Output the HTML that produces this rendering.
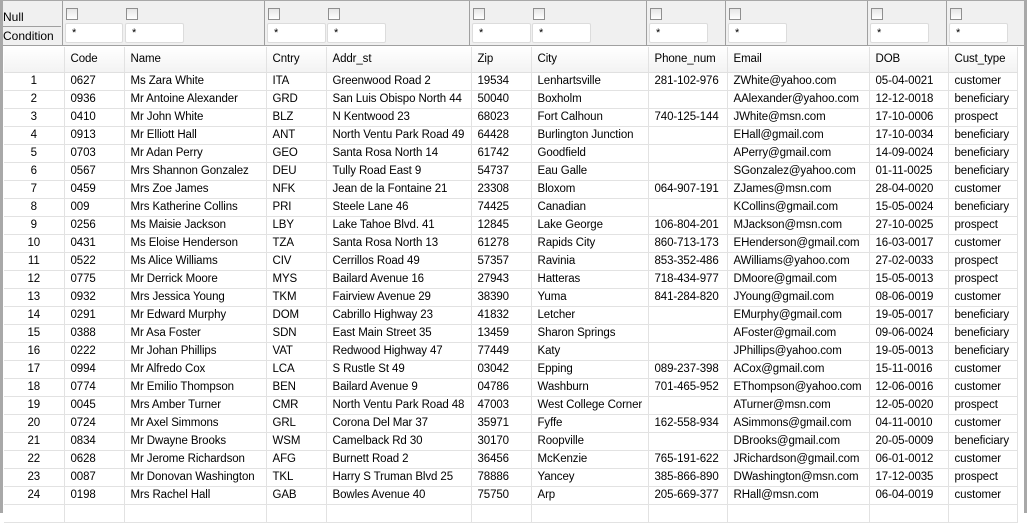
<!DOCTYPE html>
<html><head><style>
*{margin:0;padding:0;box-sizing:border-box}
body{width:1027px;height:513px;overflow:hidden;background:#fff;font-family:"Liberation Sans",Tahoma,sans-serif;font-size:12px;color:#000;position:relative}
.top{position:absolute;left:0;top:0;width:1027px;height:46px;background:#f0f0f0;border-bottom:1px solid #a0a0a0}
.lbl{position:absolute;left:3px;font-size:12px}
.cb{position:absolute;top:8px;width:12px;height:12px;border:1px solid #8f8f8f;background:linear-gradient(#e6e6e6,#fff)}
.in{position:absolute;top:23px;height:20px;background:#fff;border:1px solid #dcdcdc;border-radius:2px;padding:3px 0 0 6px;font-size:11px}
.sep{position:absolute;top:0;width:1px;height:46px;background:#a0a0a0}
.frame{position:absolute;left:0;top:0;width:1027px;height:513px;border-left:3px solid #a8a8a8;border-right:3px solid #a8a8a8;border-top:1px solid #a8a8a8;pointer-events:none}
table{position:absolute;left:4px;top:47px;width:1013px;border-collapse:collapse;table-layout:fixed;font-size:11.5px;letter-spacing:-0.1px}
td{height:18px;border-right:1px solid #e2e2e2;border-bottom:1px solid #e2e2e2;padding:0 0 0 6px;white-space:nowrap;overflow:hidden;line-height:17px}
td:first-child{text-align:center;padding:0}
tr.h td{height:25px;background:linear-gradient(#fff,#f3f3f3);border-bottom:1px solid #e0e0e0}
</style></head><body>
<div class="top">
<div class="lbl" style="top:10px">Null</div>
<div style="position:absolute;left:3px;top:26px;width:58px;height:1px;background:#a0a0a0"></div>
<div class="lbl" style="top:29px">Condition</div>
<div class="sep" style="left:62px"></div>
<div class="sep" style="left:264px"></div>
<div class="sep" style="left:469px"></div>
<div class="sep" style="left:646px"></div>
<div class="sep" style="left:725px"></div>
<div class="sep" style="left:867px"></div>
<div class="sep" style="left:946px"></div>
<div class="cb" style="left:66px"></div><div class="in" style="left:65px;width:58px">*</div>
<div class="cb" style="left:126px"></div><div class="in" style="left:125px;width:59px">*</div>
<div class="cb" style="left:268px"></div><div class="in" style="left:267px;width:59px">*</div>
<div class="cb" style="left:328px"></div><div class="in" style="left:327px;width:59px">*</div>
<div class="cb" style="left:473px"></div><div class="in" style="left:472px;width:59px">*</div>
<div class="cb" style="left:533px"></div><div class="in" style="left:532px;width:59px">*</div>
<div class="cb" style="left:650px"></div><div class="in" style="left:649px;width:59px">*</div>
<div class="cb" style="left:729px"></div><div class="in" style="left:728px;width:59px">*</div>
<div class="cb" style="left:871px"></div><div class="in" style="left:870px;width:59px">*</div>
<div class="cb" style="left:950px"></div><div class="in" style="left:949px;width:59px">*</div>
</div>
<table>
<colgroup><col style="width:60px"><col style="width:60px"><col style="width:142px"><col style="width:60px"><col style="width:145px"><col style="width:60px"><col style="width:117px"><col style="width:79px"><col style="width:142px"><col style="width:79px"><col style="width:69px"></colgroup>
<tr class="h"><td></td><td>Code</td><td>Name</td><td>Cntry</td><td>Addr_st</td><td>Zip</td><td>City</td><td>Phone_num</td><td>Email</td><td>DOB</td><td>Cust_type</td></tr>
<tr><td>1</td><td>0627</td><td>Ms Zara White</td><td>ITA</td><td>Greenwood Road 2</td><td>19534</td><td>Lenhartsville</td><td>281-102-976</td><td>ZWhite@yahoo.com</td><td>05-04-0021</td><td>customer</td></tr>
<tr><td>2</td><td>0936</td><td>Mr Antoine Alexander</td><td>GRD</td><td>San Luis Obispo North 44</td><td>50040</td><td>Boxholm</td><td></td><td>AAlexander@yahoo.com</td><td>12-12-0018</td><td>beneficiary</td></tr>
<tr><td>3</td><td>0410</td><td>Mr John White</td><td>BLZ</td><td>N Kentwood 23</td><td>68023</td><td>Fort Calhoun</td><td>740-125-144</td><td>JWhite@msn.com</td><td>17-10-0006</td><td>prospect</td></tr>
<tr><td>4</td><td>0913</td><td>Mr Elliott Hall</td><td>ANT</td><td>North Ventu Park Road 49</td><td>64428</td><td>Burlington Junction</td><td></td><td>EHall@gmail.com</td><td>17-10-0034</td><td>beneficiary</td></tr>
<tr><td>5</td><td>0703</td><td>Mr Adan Perry</td><td>GEO</td><td>Santa Rosa North 14</td><td>61742</td><td>Goodfield</td><td></td><td>APerry@gmail.com</td><td>14-09-0024</td><td>beneficiary</td></tr>
<tr><td>6</td><td>0567</td><td>Mrs Shannon Gonzalez</td><td>DEU</td><td>Tully Road East 9</td><td>54737</td><td>Eau Galle</td><td></td><td>SGonzalez@yahoo.com</td><td>01-11-0025</td><td>beneficiary</td></tr>
<tr><td>7</td><td>0459</td><td>Mrs Zoe James</td><td>NFK</td><td>Jean de la Fontaine 21</td><td>23308</td><td>Bloxom</td><td>064-907-191</td><td>ZJames@msn.com</td><td>28-04-0020</td><td>customer</td></tr>
<tr><td>8</td><td>009</td><td>Mrs Katherine Collins</td><td>PRI</td><td>Steele Lane 46</td><td>74425</td><td>Canadian</td><td></td><td>KCollins@gmail.com</td><td>15-05-0024</td><td>beneficiary</td></tr>
<tr><td>9</td><td>0256</td><td>Ms Maisie Jackson</td><td>LBY</td><td>Lake Tahoe Blvd. 41</td><td>12845</td><td>Lake George</td><td>106-804-201</td><td>MJackson@msn.com</td><td>27-10-0025</td><td>prospect</td></tr>
<tr><td>10</td><td>0431</td><td>Ms Eloise Henderson</td><td>TZA</td><td>Santa Rosa North 13</td><td>61278</td><td>Rapids City</td><td>860-713-173</td><td>EHenderson@gmail.com</td><td>16-03-0017</td><td>customer</td></tr>
<tr><td>11</td><td>0522</td><td>Ms Alice Williams</td><td>CIV</td><td>Cerrillos Road 49</td><td>57357</td><td>Ravinia</td><td>853-352-486</td><td>AWilliams@yahoo.com</td><td>27-02-0033</td><td>prospect</td></tr>
<tr><td>12</td><td>0775</td><td>Mr Derrick Moore</td><td>MYS</td><td>Bailard Avenue 16</td><td>27943</td><td>Hatteras</td><td>718-434-977</td><td>DMoore@gmail.com</td><td>15-05-0013</td><td>prospect</td></tr>
<tr><td>13</td><td>0932</td><td>Mrs Jessica Young</td><td>TKM</td><td>Fairview Avenue 29</td><td>38390</td><td>Yuma</td><td>841-284-820</td><td>JYoung@gmail.com</td><td>08-06-0019</td><td>customer</td></tr>
<tr><td>14</td><td>0291</td><td>Mr Edward Murphy</td><td>DOM</td><td>Cabrillo Highway 23</td><td>41832</td><td>Letcher</td><td></td><td>EMurphy@gmail.com</td><td>19-05-0017</td><td>beneficiary</td></tr>
<tr><td>15</td><td>0388</td><td>Mr Asa Foster</td><td>SDN</td><td>East Main Street 35</td><td>13459</td><td>Sharon Springs</td><td></td><td>AFoster@gmail.com</td><td>09-06-0024</td><td>beneficiary</td></tr>
<tr><td>16</td><td>0222</td><td>Mr Johan Phillips</td><td>VAT</td><td>Redwood Highway 47</td><td>77449</td><td>Katy</td><td></td><td>JPhillips@yahoo.com</td><td>19-05-0013</td><td>beneficiary</td></tr>
<tr><td>17</td><td>0994</td><td>Mr Alfredo Cox</td><td>LCA</td><td>S Rustle St 49</td><td>03042</td><td>Epping</td><td>089-237-398</td><td>ACox@gmail.com</td><td>15-11-0016</td><td>customer</td></tr>
<tr><td>18</td><td>0774</td><td>Mr Emilio Thompson</td><td>BEN</td><td>Bailard Avenue 9</td><td>04786</td><td>Washburn</td><td>701-465-952</td><td>EThompson@yahoo.com</td><td>12-06-0016</td><td>customer</td></tr>
<tr><td>19</td><td>0045</td><td>Mrs Amber Turner</td><td>CMR</td><td>North Ventu Park Road 48</td><td>47003</td><td>West College Corner</td><td></td><td>ATurner@msn.com</td><td>12-05-0020</td><td>prospect</td></tr>
<tr><td>20</td><td>0724</td><td>Mr Axel Simmons</td><td>GRL</td><td>Corona Del Mar 37</td><td>35971</td><td>Fyffe</td><td>162-558-934</td><td>ASimmons@gmail.com</td><td>04-11-0010</td><td>customer</td></tr>
<tr><td>21</td><td>0834</td><td>Mr Dwayne Brooks</td><td>WSM</td><td>Camelback Rd 30</td><td>30170</td><td>Roopville</td><td></td><td>DBrooks@gmail.com</td><td>20-05-0009</td><td>beneficiary</td></tr>
<tr><td>22</td><td>0628</td><td>Mr Jerome Richardson</td><td>AFG</td><td>Burnett Road 2</td><td>36456</td><td>McKenzie</td><td>765-191-622</td><td>JRichardson@gmail.com</td><td>06-01-0012</td><td>customer</td></tr>
<tr><td>23</td><td>0087</td><td>Mr Donovan Washington</td><td>TKL</td><td>Harry S Truman Blvd 25</td><td>78886</td><td>Yancey</td><td>385-866-890</td><td>DWashington@msn.com</td><td>17-12-0035</td><td>prospect</td></tr>
<tr><td>24</td><td>0198</td><td>Mrs Rachel Hall</td><td>GAB</td><td>Bowles Avenue 40</td><td>75750</td><td>Arp</td><td>205-669-377</td><td>RHall@msn.com</td><td>06-04-0019</td><td>customer</td></tr>
<tr><td></td><td></td><td></td><td></td><td></td><td></td><td></td><td></td><td></td><td></td><td></td></tr>
</table>
<div class="frame"></div>
</body></html>
